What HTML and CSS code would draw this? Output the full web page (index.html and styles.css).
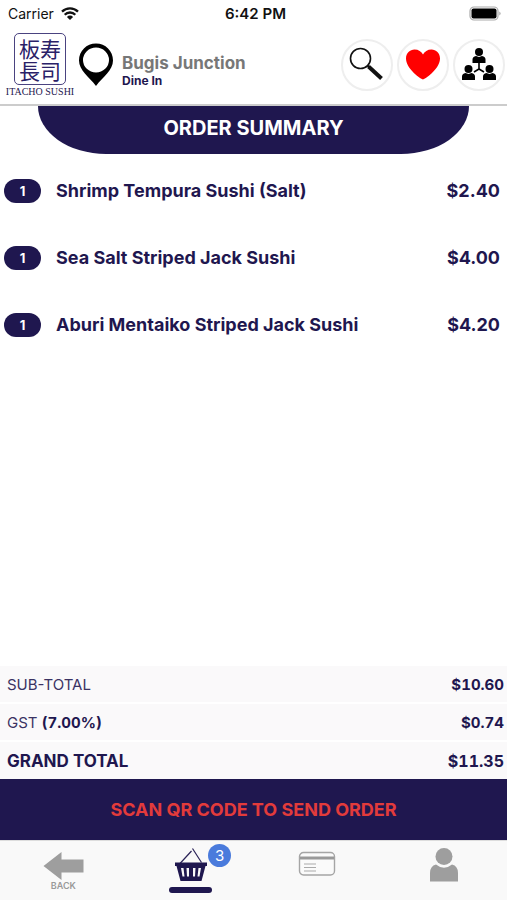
FILE: index.html
```
<!DOCTYPE html>
<html lang="en">
<head>
<meta charset="utf-8">
<meta name="viewport" content="width=device-width, initial-scale=1">
<title>Order Summary</title>
<link rel="stylesheet" href="styles.css">
</head>
<body>
<div class="status">
  <div class="carrier"><span>Carrier</span>
    <svg width="18" height="13" viewBox="0 0 18 13" aria-hidden="true"><path d="M1 4.600a11.400 11.400 0 0 1 16 0M3.700 7.700a7.500 7.500 0 0 1 10.600 0" fill="none" stroke="#111" stroke-width="2.300"/><path d="M9 13 5.900 9.900a4.400 4.400 0 0 1 6.200 0z" fill="#111"/></svg>
  </div>
  <div class="clock">6:42 PM</div>
  <svg class="battery" width="34" height="16" viewBox="0 0 34 16" aria-hidden="true"><rect x="1" y="1" width="28" height="13" rx="4" fill="#fff" stroke="#aaa" stroke-width="1.200"/><rect x="2.500" y="2.500" width="25" height="10" rx="2" fill="#000"/><path d="M30.500 5.500q2 2 0 4z" fill="#888"/></svg>
</div>
<header class="header">
  <div class="logo">
    <div class="seal" lang="ja">板寿長司</div>
    <div class="brand">ITACHO SUSHI</div>
  </div>
  <svg class="pin" width="36" height="44" viewBox="0 0 36 44" aria-hidden="true"><path fill="#000" fill-rule="evenodd" d="M18 .5C8.500 .5 1 8 1 17.500c0 10 10 16 17 25.500 7-9.500 17-15.500 17-25.500C35 8 27.500 .5 18 .5zM18 4.500a13 12.500 0 1 1 0 25 13 12.500 0 1 1 0-25z"/></svg>
  <div class="place"><h2>Bugis Junction</h2><p>Dine In</p></div>
  <div class="actions">
    <button type="button" aria-label="Search"><svg width="36" height="36" viewBox="0 0 36 36"><circle cx="11.500" cy="11.500" r="10" fill="none" stroke="#111" stroke-width="1.600"/><path d="m18.500 18.500 3 3" stroke="#111" stroke-width="2"/><path d="m19.500 19.500 13 12" stroke="#111" stroke-width="4"/></svg></button>
    <button type="button" aria-label="Favourites"><svg width="36" height="36" viewBox="0 0 36 36"><path fill="#f00" d="M18 32.500C13.500 30.500 1 21 1 11.500 1 6 5 2.500 9.500 2.500c4 0 7 2 8.500 5 1.500-3 4.500-5 8.500-5 4.500 0 8.500 3.500 8.500 9 0 9.500-12.500 19-17 21z"/></svg></button>
    <button type="button" aria-label="Group order"><svg width="36" height="36" viewBox="0 0 36 36"><g fill="#000"><circle cx="18" cy="5" r="4"/><path d="M11.500 16v-3.500q0-3 3.500-3.500l3 1 3-1q3.500 .5 3.500 3.500V16z"/><circle cx="7.500" cy="22" r="4"/><path d="M1 33v-3.500q0-3 3.500-3.500l3 1 3-1q3.500 .5 3.500 3.500V33z"/><circle cx="28.500" cy="22" r="4"/><path d="M22 33v-3.500q0-3 3.500-3.500l3 1 3-1q3.500 .5 3.500 3.500V33z"/></g><path d="M18 16v6m-5 3 5-3 5 3" fill="none" stroke="#000" stroke-width="1.600"/></svg></button>
  </div>
</header>
<main class="main">
  <h1 class="title">ORDER SUMMARY</h1>
  <ul class="items">
    <li><span class="qty">1</span><span class="name">Shrimp Tempura Sushi (Salt)</span><span class="price">$2.40</span></li>
    <li><span class="qty">1</span><span class="name">Sea Salt Striped Jack Sushi</span><span class="price">$4.00</span></li>
    <li><span class="qty">1</span><span class="name">Aburi Mentaiko Striped Jack Sushi</span><span class="price">$4.20</span></li>
  </ul>
</main>
<dl class="totals">
  <div><dt>SUB-TOTAL</dt><dd>$10.60</dd></div>
  <div><dt>GST <b>(7.00%)</b></dt><dd>$0.74</dd></div>
  <div class="grand"><dt>GRAND TOTAL</dt><dd>$11.35</dd></div>
</dl>
<button type="button" class="scan">SCAN QR CODE TO SEND ORDER</button>
<nav class="nav">
  <a href="#back"><svg width="42" height="30" viewBox="0 0 42 30" aria-hidden="true"><path fill="#9e9e9e" d="M1.500 15 19.500 1v7.500h22v13h-22V29z"/></svg><span class="label">BACK</span></a>
  <a href="#basket" class="tall" aria-label="Basket, 3 items"><svg width="36" height="36" viewBox="0 0 36 36" aria-hidden="true"><path d="M8 16.500 19.500 4M20.500 1.500l9 14" fill="none" stroke="#2b2358" stroke-width="1.200"/><path fill="#1f174f" fill-rule="evenodd" d="M3 15.500h32v3.500h-1.500L29.500 34h-21L4.500 19H3zM9 21l1.500 8.500h2L11.500 21zM14.500 21l.5 8.500h2V21zM21 21v8.500h2l.5-8.500zM26.500 21l-1 8.500h2L29 21z"/></svg><span class="bar"></span><span class="badge">3</span></a>
  <a href="#payment" aria-label="Payment"><svg width="38" height="26" viewBox="0 0 38 26" aria-hidden="true"><rect x="1.500" y="1.500" width="35" height="22.500" rx="4" fill="#fafafa" stroke="#a5a5a5" stroke-width="1.400"/><path d="M2 7h34" stroke="#999" stroke-width="3.200"/><path d="M6 13h12M6 16.500h12M6 20h12" stroke="#aaa" stroke-width="1.200"/></svg></a>
  <a href="#account" class="tall" aria-label="Account"><svg width="30" height="36" viewBox="0 0 30 36" aria-hidden="true"><circle cx="15" cy="9.500" r="8.500" fill="#9e9e9e"/><path fill="#9e9e9e" d="M1 34.500V26q0-7 6-8.500 8 6.500 16 0 6 1.500 6 8.500v8.500z"/></svg></a>
</nav>
</body>
</html>
```
FILE: styles.css
```
* { box-sizing: border-box; }
body {
  margin: 0;
  min-height: 100vh;
  display: flex;
  flex-direction: column;
  background: #fff;
  color: #1f174f;
  font-family: Inter, "Liberation Sans", sans-serif;
}
h1, h2, p, ul, dl, dd { margin: 0; padding: 0; }
button { border: 0; padding: 0; font: inherit; cursor: pointer; }
svg { display: block; flex: none; }

.status {
  display: grid;
  grid-template-columns: 1fr auto 1fr;
  align-items: center;
  height: 27px;
  padding: 0 4px 0 8px;
  color: #111;
  font-size: 14px;
}
.carrier { display: flex; align-items: center; gap: 7px; }
.clock { font-size: 15px; font-weight: 600; }
.battery { justify-self: end; }

.header {
  display: flex;
  align-items: center;
  height: 79px;
  padding: 0 2px 2px 7px;
  border-bottom: 2px solid #ccc;
}
.logo {
  display: flex;
  flex-direction: column;
  align-items: center;
  width: 66px;
  padding-top: 3px;
}
.seal {
  width: 52px;
  height: 52px;
  padding: 3px 4px;
  border: 1px solid #4a4380;
  border-radius: 5px;
  color: #2a2168;
  font-family: "Noto Sans CJK JP", sans-serif;
  font-size: 21px;
  line-height: 22px;
}
.brand {
  font-family: "Liberation Serif", serif;
  font-size: 10px;
  line-height: 14px;
  white-space: nowrap;
}
.pin { margin-left: 5px; }
.place { margin: 11px 0 0 8px; }
.place h2 { color: #777; font-size: 17px; font-weight: 700; line-height: 22px; }
.place p { font-size: 12px; font-weight: 700; line-height: 14px; }
.actions { display: flex; gap: 4px; margin-left: auto; }
.actions button {
  display: grid;
  place-items: center;
  width: 52px;
  height: 52px;
  border: 2px solid #eee;
  border-radius: 50%;
  background: #fff;
}

.main { flex: 1; }
.title {
  height: 48px;
  margin: 0 38px 3px;
  border-radius: 0 0 68px 68px / 0 0 48px 48px;
  background: #1f174f;
  color: #fff;
  font-size: 20px;
  font-weight: 700;
  line-height: 44px;
  text-align: center;
}
.items { list-style: none; font-size: 18px; font-weight: 700; }
.items li { display: flex; align-items: center; height: 67px; padding: 0 7px 0 4px; }
.qty {
  width: 37px;
  margin-right: 15px;
  border-radius: 12px;
  background: #1f174f;
  color: #fff;
  font-size: 13px;
  line-height: 24px;
  text-align: center;
}
.price { margin-left: auto; }

.totals { font-size: 15px; }
.totals > div {
  display: flex;
  align-items: center;
  justify-content: space-between;
  height: 38px;
  padding: 0 3px 0 7px;
  border-bottom: 2px solid #fff;
  background: #faf9fa;
}
.totals dt { color: #3a3363; }
.totals b, .totals dd {
  color: #1f174f;
  font-weight: 700;
  font-variant-numeric: tabular-nums;
}
.totals .grand { height: 37px; border-bottom: 0; }
.grand dt { color: #1f174f; font-size: 17px; font-weight: 700; }
.grand dd { font-size: 16px; }

.scan {
  height: 61px;
  background: #1f174f;
  color: #e23b3b;
  font-size: 18px;
  font-weight: 700;
}
.nav {
  display: grid;
  grid-template-columns: repeat(4, 1fr);
  height: 60px;
  border-top: 1px solid #ddd;
  background: #f9f9f9;
}
.nav a {
  position: relative;
  display: flex;
  flex-direction: column;
  align-items: center;
  padding-top: 10px;
  color: #9a9a9a;
  text-decoration: none;
}
.nav .tall { padding-top: 6px; }
.label { font-size: 9px; font-weight: 600; line-height: 10px; }
.bar { width: 43px; height: 6px; margin-top: 4px; border-radius: 3px; background: #1f174f; }
.badge {
  position: absolute;
  top: 3px;
  left: calc(50% + 18px);
  width: 23px;
  height: 23px;
  border-radius: 50%;
  background: #4a7bdc;
  color: #fff;
  font-size: 15px;
  line-height: 23px;
  text-align: center;
}
```
